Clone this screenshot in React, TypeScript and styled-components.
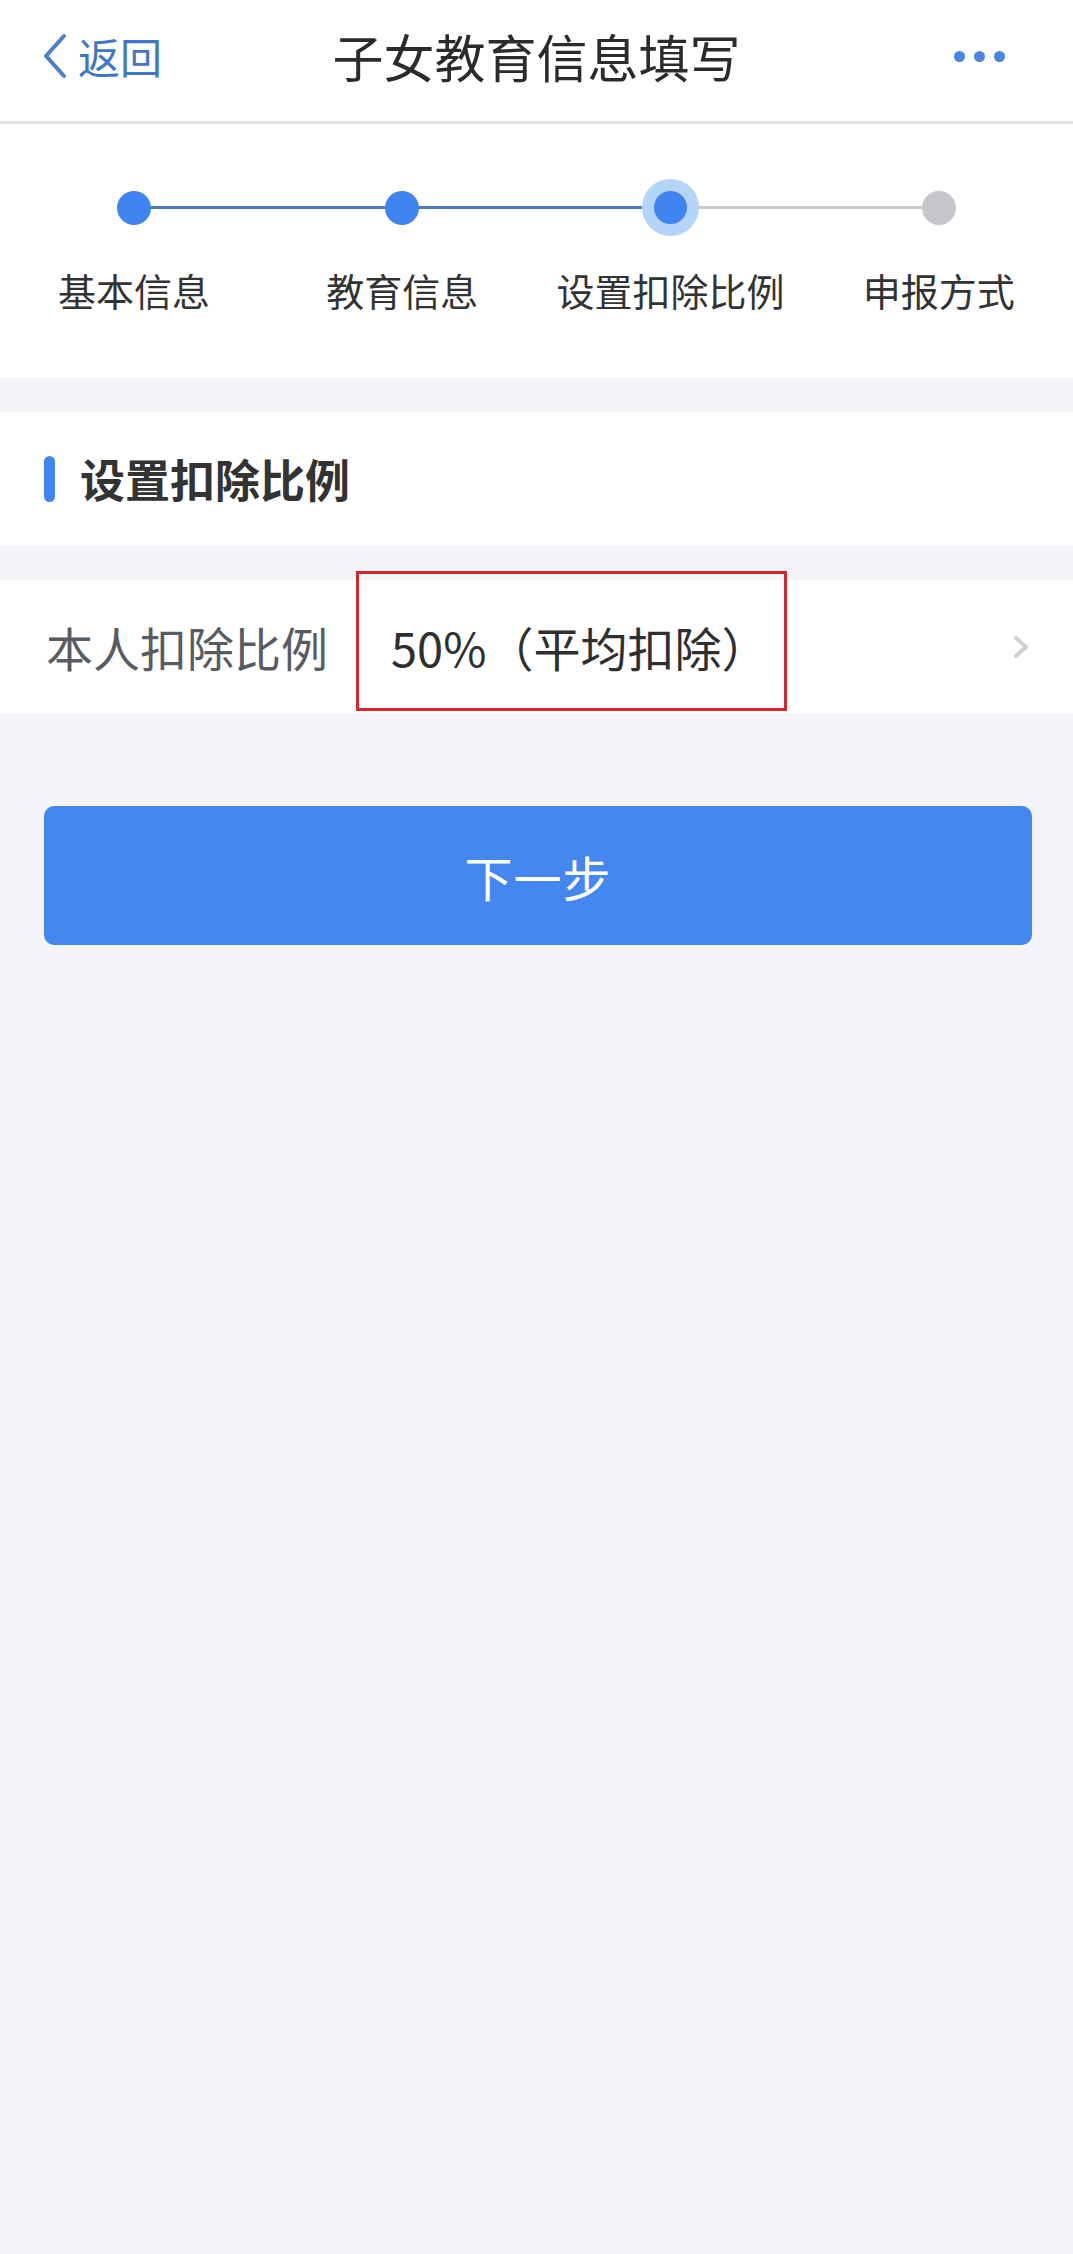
import styled, { createGlobalStyle } from 'styled-components';

const BLUE = '#4386f1';

const GlobalStyle = createGlobalStyle`
    html, body {
        margin: 0;
        padding: 0;
        background: #f4f5f9;
        font-family: "Noto Sans CJK SC", "Noto Sans", sans-serif;
    }
`

const Page = styled.div`
    width: 1073px;
    min-height: 2254px;
    background: #f4f5f9;
    display: flex;
    flex-direction: column;
`

const NavBar = styled.div`
    height: 121px;
    background: #fff;
    border-bottom: 3px solid #e3e3e5;
    display: flex;
    align-items: flex-start;
`

const NavInner = styled.div`
    height: 112px;
    flex: 1;
    display: flex;
    align-items: center;
    justify-content: space-between;
    padding: 0 68px 0 42px;
`

const BackLink = styled.div`
    display: flex;
    align-items: center;
    gap: 10px;
    color: #3f77c6;
    font-size: 42px;
    line-height: 1;
    width: 200px;
`

const NavTitle = styled.div`
    font-size: 51px;
    color: #2b2b2b;
    line-height: 1;
    flex: 1;
    text-align: center;
    margin-left: 26px;
`

const MoreDots = styled.div`
    width: 200px;
    display: flex;
    justify-content: flex-end;
    gap: 9px;
`

const MoreDot = styled.span`
    width: 11px;
    height: 11px;
    border-radius: 50%;
    background: #4a86e0;
`

const StepperPanel = styled.div`
    background: #fff;
    padding: 55px 0 63px;
    display: grid;
    grid-template-columns: repeat(4, 1fr);
`

const Step = styled.div`
    display: flex;
    flex-direction: column;
    align-items: center;
    gap: 29px;
`

const DotRow = styled.div`
    width: 100%;
    height: 57px;
    display: flex;
    align-items: center;
`

const Track = styled.div<{ $state: 'done' | 'todo' | 'none' }>`
    flex: 1;
    height: 3px;
    background: ${p => p.$state === 'done' ? '#4a7bbb' : p.$state === 'todo' ? '#c9c9cb' : 'transparent'};
`

const Dot = styled.div<{ $state: 'done' | 'current' | 'todo' }>`
    width: ${p => p.$state === 'current' ? 57 : 34}px;
    height: ${p => p.$state === 'current' ? 57 : 34}px;
    box-sizing: border-box;
    border-radius: 50%;
    background: ${p => p.$state === 'todo' ? '#c4c6cc' : '#3f84f0'};
    border: ${p => p.$state === 'current' ? '12px solid #b4d4f8' : 'none'};
    flex-shrink: 0;
`

const StepLabel = styled.div`
    font-size: 38px;
    line-height: 50px;
    color: #333;
    white-space: nowrap;
`

const SectionHeader = styled.div`
    margin-top: 34px;
    height: 133px;
    background: #fff;
    display: flex;
    align-items: center;
    padding-left: 44px;
    gap: 25px;
`

const SectionBar = styled.span`
    width: 11px;
    height: 46px;
    border-radius: 6px;
    background: ${BLUE};
`

const SectionTitle = styled.div`
    font-size: 45px;
    font-weight: 700;
    color: #333;
    line-height: 1;
`

const FieldRow = styled.div`
    margin-top: 35px;
    height: 133px;
    background: #fff;
    display: flex;
    align-items: center;
    padding: 0 43px 0 46px;
`

const FieldLabel = styled.div`
    font-size: 47px;
    color: #585b61;
    line-height: 1;
    width: 345px;
    flex-shrink: 0;
`

const FieldValue = styled.div`
    flex: 1;
    align-self: stretch;
    display: flex;
    align-items: center;
    position: relative;
    font-size: 47px;
    color: #2f2f2f;
    line-height: 1;
`

const Highlight = styled.div`
    position: absolute;
    left: -35px;
    top: -9px;
    width: 431px;
    height: 140px;
    box-sizing: border-box;
    border: 3px solid #d6252d;
    pointer-events: none;
`

const NextButton = styled.button`
    margin: 93px 41px 0 44px;
    height: 139px;
    border: none;
    border-radius: 10px;
    background: #4587f1;
    color: #fff;
    font-family: inherit;
    font-size: 48px;
    letter-spacing: 1px;
`

type StepState = 'done' | 'current' | 'todo'

const steps: { label: string, state: StepState }[] = [
    { label: '基本信息', state: 'done' },
    { label: '教育信息', state: 'done' },
    { label: '设置扣除比例', state: 'current' },
    { label: '申报方式', state: 'todo' },
]

function Stepper() {
    return <StepperPanel>
        {steps.map((s, i) => {
            const left = i === 0 ? 'none' : (s.state === 'todo' ? 'todo' : 'done')
            const next = steps[i + 1]
            const right = !next ? 'none' : (next.state === 'todo' ? 'todo' : 'done')
            return <Step key={s.label}>
                <DotRow>
                    <Track $state={left} />
                    <Dot $state={s.state} />
                    <Track $state={right} />
                </DotRow>
                <StepLabel>{s.label}</StepLabel>
            </Step>
        })}
    </StepperPanel>
}

export default function App() {
    return <>
        <GlobalStyle />
        <Page>
            <NavBar>
                <NavInner>
                    <BackLink>
                        <svg width="26" height="46" viewBox="0 0 26 46">
                            <path d="M22 3 L4 23 L22 43" fill="none" stroke="#4a80d2" strokeWidth="4" strokeLinecap="round" strokeLinejoin="round" />
                        </svg>
                        返回
                    </BackLink>
                    <NavTitle>子女教育信息填写</NavTitle>
                    <MoreDots>
                        <MoreDot />
                        <MoreDot />
                        <MoreDot />
                    </MoreDots>
                </NavInner>
            </NavBar>
            <Stepper />
            <SectionHeader>
                <SectionBar />
                <SectionTitle>设置扣除比例</SectionTitle>
            </SectionHeader>
            <FieldRow>
                <FieldLabel>本人扣除比例</FieldLabel>
                <FieldValue>
                    50%（平均扣除）
                    <Highlight />
                </FieldValue>
                <svg width="18" height="24" viewBox="0 0 18 24">
                    <path d="M4 3 L14 12 L4 21" fill="none" stroke="#d0d0d2" strokeWidth="4" strokeLinecap="round" strokeLinejoin="round" />
                </svg>
            </FieldRow>
            <NextButton>下一步</NextButton>
        </Page>
    </>
}
